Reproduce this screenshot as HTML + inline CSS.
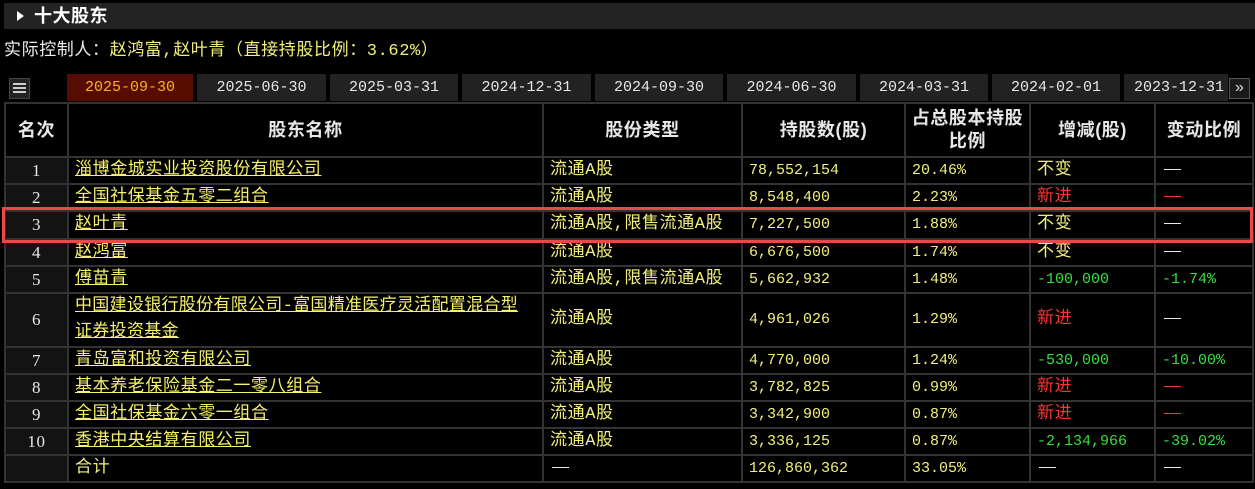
<!DOCTYPE html>
<html><head><meta charset="utf-8"><style>
body{margin:0;width:1255px;height:489px;background:#000;overflow:hidden;font-family:"Liberation Sans","Noto Sans CJK SC",sans-serif;color:#ddd;position:relative}
.hdr{position:absolute;left:4px;top:3px;width:1251px;height:26px;background:#232323;color:#fff;font-size:18px;font-weight:bold;line-height:26px}
.hdr .tri{position:absolute;left:13px;top:8px;width:0;height:0;border-left:7px solid #fff;border-top:5px solid transparent;border-bottom:5px solid transparent}
.hdr span{position:absolute;left:30px;letter-spacing:0.5px}
.ctl{position:absolute;left:4px;top:42px;font-size:17px;letter-spacing:0.6px;color:#eee;line-height:20px;font-family:"Liberation Mono","Noto Sans CJK SC",monospace}
.ctl b{font-weight:normal;color:#f2f07a}
.menu{position:absolute;left:9px;top:78px;width:19px;height:19px;background:#222;border:1px solid #444}
.menu i{position:absolute;left:3px;width:13px;height:2px;background:#ccc}
.tab{position:absolute;top:74px;height:27px;background:#222;color:#e8e8e8;font-size:15px;line-height:28px;text-align:center;font-family:"Liberation Mono",monospace}
.tab.on{background:#560c00;color:#ffb020}
.more{position:absolute;left:1229px;top:78px;width:19px;height:19px;border:1px solid #555;background:#1a1a1a;color:#ddd;font-size:16px;line-height:17px;text-align:center}
table{position:absolute;left:4px;top:102px;border-collapse:collapse;table-layout:fixed;width:1248px}
td{border:2px solid #333;padding:0 0 0 6px;height:25px;font-size:17px;letter-spacing:0.6px;color:#f2f07a;white-space:nowrap;font-family:"Liberation Mono","Noto Sans CJK SC",monospace;line-height:20px;overflow:hidden}
td.m{font-size:15px;letter-spacing:0}
tr.h td{height:52px;color:#e8e8e8;font-weight:bold;text-align:center;font-family:"Liberation Sans","Noto Sans CJK SC",sans-serif;line-height:23px;padding:0;font-size:18px}
td.r{text-align:center;padding:0;color:#e8e8e8;background:#131313;font-family:"Liberation Serif",serif;font-size:17px}
td.n{text-decoration:underline;color:#f6f26a}
.red{color:#ff3333}.grn{color:#33e040}.wh{color:#e8e8e8}
.d{display:inline-block;width:17px;height:1px;background:currentColor;vertical-align:middle;margin-left:2px}
.hl{position:absolute;left:2px;top:207px;width:1245px;height:30px;border:3px solid #e84a4a}
</style></head><body>
<div class="hdr"><div class="tri"></div><span>十大股东</span></div>
<div class="ctl">实际控制人：<b>赵鸿富,赵叶青（直接持股比例：3.62%）</b></div>
<div class="menu"><i style="top:4px"></i><i style="top:8px"></i><i style="top:12px"></i></div>
<div class="tab on" style="left:67px;width:126px">2025-09-30</div>
<div class="tab" style="left:197px;width:129px">2025-06-30</div>
<div class="tab" style="left:330px;width:128px">2025-03-31</div>
<div class="tab" style="left:462px;width:129px">2024-12-31</div>
<div class="tab" style="left:595px;width:128px">2024-09-30</div>
<div class="tab" style="left:727px;width:129px">2024-06-30</div>
<div class="tab" style="left:860px;width:128px">2024-03-31</div>
<div class="tab" style="left:992px;width:128px">2024-02-01</div>
<div class="tab" style="left:1124px;width:104px;overflow:hidden;text-align:left;padding-left:10px;box-sizing:border-box;white-space:nowrap">2023-12-31</div>
<div class="more">»</div>
<table>
<colgroup><col style="width:63px"><col style="width:475px"><col style="width:199px"><col style="width:163px"><col style="width:125px"><col style="width:125px"><col style="width:98px"></colgroup>
<tr class="h"><td>名次</td><td>股东名称</td><td>股份类型</td><td>持股数(股)</td><td>占总股本持股<br>比例</td><td>增减(股)</td><td>变动比例</td></tr>
<tr><td class="r">1</td><td class="n">淄博金城实业投资股份有限公司</td><td>流通A股</td><td class="m">78,552,154</td><td class="m">20.46%</td><td>不变</td><td class="wh"><span class="d"></span></td></tr>
<tr><td class="r">2</td><td class="n">全国社保基金五零二组合</td><td>流通A股</td><td class="m">8,548,400</td><td class="m">2.23%</td><td class="red">新进</td><td class="red"><span class="d"></span></td></tr>
<tr><td class="r" style="height:26px">3</td><td class="n">赵叶青</td><td>流通A股,限售流通A股</td><td class="m">7,227,500</td><td class="m">1.88%</td><td>不变</td><td class="wh"><span class="d"></span></td></tr>
<tr><td class="r">4</td><td class="n">赵鸿富</td><td>流通A股</td><td class="m">6,676,500</td><td class="m">1.74%</td><td>不变</td><td class="wh"><span class="d"></span></td></tr>
<tr><td class="r">5</td><td class="n">傅苗青</td><td>流通A股,限售流通A股</td><td class="m">5,662,932</td><td class="m">1.48%</td><td class="grn m">-100,000</td><td class="grn m">-1.74%</td></tr>
<tr><td class="r" style="height:52px">6</td><td class="n" style="line-height:26px;letter-spacing:0.3px">中国建设银行股份有限公司-富国精准医疗灵活配置混合型<br>证券投资基金</td><td>流通A股</td><td class="m">4,961,026</td><td class="m">1.29%</td><td class="red">新进</td><td class="wh"><span class="d"></span></td></tr>
<tr><td class="r">7</td><td class="n">青岛富和投资有限公司</td><td>流通A股</td><td class="m">4,770,000</td><td class="m">1.24%</td><td class="grn m">-530,000</td><td class="grn m">-10.00%</td></tr>
<tr><td class="r">8</td><td class="n">基本养老保险基金二一零八组合</td><td>流通A股</td><td class="m">3,782,825</td><td class="m">0.99%</td><td class="red">新进</td><td class="red"><span class="d"></span></td></tr>
<tr><td class="r">9</td><td class="n">全国社保基金六零一组合</td><td>流通A股</td><td class="m">3,342,900</td><td class="m">0.87%</td><td class="red">新进</td><td class="red"><span class="d"></span></td></tr>
<tr><td class="r">10</td><td class="n">香港中央结算有限公司</td><td>流通A股</td><td class="m">3,336,125</td><td class="m">0.87%</td><td class="grn m">-2,134,966</td><td class="grn m">-39.02%</td></tr>
<tr><td class="r"></td><td>合计</td><td class="wh"><span class="d"></span></td><td class="m">126,860,362</td><td class="m">33.05%</td><td class="wh"><span class="d"></span></td><td class="wh"><span class="d"></span></td></tr>
</table>
<div class="hl"></div>
</body></html>
